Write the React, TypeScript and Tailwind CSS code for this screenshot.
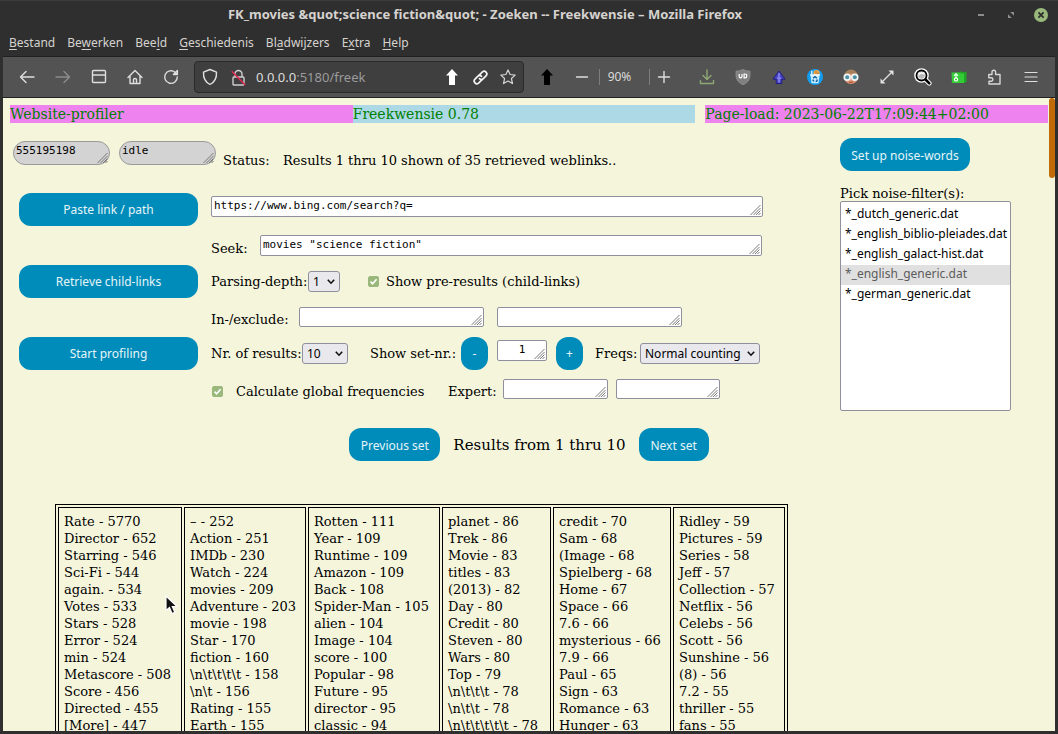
import React, { useId } from "react";
import type { ReactNode } from "react";

const menus: [string, string, string][] = [
  ["", "B", "estand"],
  ["Be", "w", "erken"],
  ["Bee", "l", "d"],
  ["", "G", "eschiedenis"],
  ["Bl", "a", "dwijzers"],
  ["E", "x", "tra"],
  ["", "H", "elp"],
];

const noiseFilters = [
  "*_dutch_generic.dat",
  "*_english_biblio-pleiades.dat",
  "*_english_galact-hist.dat",
  "*_english_generic.dat",
  "*_german_generic.dat",
];

const columns: { width: string; lines: string[] }[] = [
  { width: "w-[124px]", lines: ["Rate - 5770", "Director - 652", "Starring - 546", "Sci-Fi - 544", "again. - 534", "Votes - 533", "Stars - 528", "Error - 524", "min - 524", "Metascore - 508", "Score - 456", "Directed - 455", "[More] - 447"] },
  { width: "w-[122px]", lines: ["– - 252", "Action - 251", "IMDb - 230", "Watch - 224", "movies - 209", "Adventure - 203", "movie - 198", "Star - 170", "fiction - 160", "\\n\\t\\t\\t\\t - 158", "\\n\\t - 156", "Rating - 155", "Earth - 155"] },
  { width: "w-[132px]", lines: ["Rotten - 111", "Year - 109", "Runtime - 109", "Amazon - 109", "Back - 108", "Spider-Man - 105", "alien - 104", "Image - 104", "score - 100", "Popular - 98", "Future - 95", "director - 95", "classic - 94"] },
  { width: "w-[109px]", lines: ["planet - 86", "Trek - 86", "Movie - 83", "titles - 83", "(2013) - 82", "Day - 80", "Credit - 80", "Steven - 80", "Wars - 80", "Top - 79", "\\n\\t\\t\\t - 78", "\\n\\t\\t - 78", "\\n\\t\\t\\t\\t\\t - 78"] },
  { width: "w-[118px]", lines: ["credit - 70", "Sam - 68", "(Image - 68", "Spielberg - 68", "Home - 67", "Space - 66", "7.6 - 66", "mysterious - 66", "7.9 - 66", "Paul - 65", "Sign - 63", "Romance - 63", "Hunger - 63"] },
  { width: "w-[112px]", lines: ["Ridley - 59", "Pictures - 59", "Series - 58", "Jeff - 57", "Collection - 57", "Netflix - 56", "Celebs - 56", "Scott - 56", "Sunshine - 56", "(8) - 56", "7.2 - 55", "thriller - 55", "fans - 55"] },
];

function ToolButton({ label, className = "w-9", children }: { label: string; className?: string; children: ReactNode }) {
  return (
    <button type="button" aria-label={label} className={`flex h-8 shrink-0 items-center justify-center ${className}`}>
      {children}
    </button>
  );
}

function Line({ d, color = "#dedede", width = 1.4 }: { d: string; color?: string; width?: number }) {
  return (
    <svg width="16" height="16" viewBox="0 0 16 16" fill="none" stroke={color} strokeWidth={width} strokeLinecap="round" strokeLinejoin="round">
      <path d={d} />
    </svg>
  );
}

function Action({ className = "", children }: { className?: string; children: ReactNode }) {
  return (
    <button type="button" className={`h-[33px] shrink-0 rounded-xl bg-[#008cba] pt-0.5 font-['Noto_Sans',sans-serif] text-xs text-[#e6f4f8] ${className}`}>
      {children}
    </button>
  );
}

function Label({ htmlFor, className = "", children }: { htmlFor: string; className?: string; children: ReactNode }) {
  return (
    <label htmlFor={htmlFor} className={`pt-0.5 leading-[14px] whitespace-nowrap ${className}`}>
      {children}
    </label>
  );
}

function Area({ id, label, value = "", wrap, box }: { id?: string; label?: string; value?: string; wrap: string; box?: string }) {
  return (
    <div className={`relative shrink-0 ${wrap}`}>
      <textarea
        id={id}
        aria-label={label}
        defaultValue={value}
        className={`block h-full w-full resize-none overflow-hidden border px-[2px] py-[2px] font-['DejaVu_Sans_Mono',monospace] text-[11px] leading-[13px] text-black outline-none ${box ?? "rounded-[2px] border-[#8f8f9d] bg-white"}`}
      />
      <svg className="pointer-events-none absolute right-[2px] bottom-[2px]" width="11" height="10" viewBox="0 0 11 10" stroke="#6c6c6c" strokeWidth="0.9" fill="none">
        <path d="M0.5 10 10.5 0M3.5 10 10.5 3M6 10 10.5 5.5M8.5 10 10.5 8" />
      </svg>
    </div>
  );
}

function Drop({ id, options, className }: { id: string; options: string[]; className: string }) {
  return (
    <div className={`relative shrink-0 ${className}`}>
      <select id={id} className="block h-[21px] w-full appearance-none rounded-[3px] border border-[#8f8f9d] bg-[#e9e9ed] pl-1 font-['Noto_Sans',sans-serif] text-xs leading-[19px] text-black">
        {options.map((o) => (
          <option key={o}>{o}</option>
        ))}
      </select>
      <svg className="pointer-events-none absolute top-[8px] right-[5px]" width="8" height="6" viewBox="0 0 8 6" fill="none" stroke="#111" strokeWidth="1.6">
        <path d="M0.8 0.8 4 4.2 7.2 0.8" />
      </svg>
    </div>
  );
}

function Check({ id, children, className }: { id: string; children: ReactNode; className: string }) {
  return (
    <div className={`flex items-center ${className}`}>
      <span className="relative flex">
        <input id={id} type="checkbox" defaultChecked className="peer size-[11px] appearance-none rounded-[2px] border border-[#8f8f9d] bg-white checked:border-[#9ab87c] checked:bg-[#9ab87c]" />
        <svg className="pointer-events-none absolute inset-0 hidden peer-checked:block" width="11" height="11" viewBox="0 0 11 11" fill="none" stroke="#fff" strokeWidth="1.6">
          <path d="M2.5 5.6 4.6 7.8 8.6 3.2" />
        </svg>
      </span>
      <Label htmlFor={id}>{children}</Label>
    </div>
  );
}

function TitleBar() {
  return (
    <header className="flex h-7 shrink-0 items-center border-t border-[#3c3c3c] pr-0.5 pl-1">
      <h1 className="min-w-0 flex-1 truncate text-center text-[13px] font-bold text-[#d6d3cf]">
        FK_movies &amp;quot;science fiction&amp;quot; - Zoeken -- Freekwensie – Mozilla Firefox
      </h1>
      <button type="button" aria-label="Minimize" className="flex w-[30px] justify-center">
        <span className="h-[2px] w-1.5 bg-[#8d8d8d]" />
      </button>
      <button type="button" aria-label="Restore" className="flex w-[30px] justify-center">
        <svg width="6" height="6" viewBox="0 0 7 7" fill="#8d8d8d">
          <path d="M2.5 0H7V4.5ZM0 2.5V7H4.5Z" />
        </svg>
      </button>
      <button type="button" aria-label="Close" className="flex w-[30px] justify-center">
        <svg width="14" height="14" viewBox="0 0 14 14">
          <circle cx="7" cy="7" r="7" fill="#9ab87c" />
          <path d="M4.4 4.4 9.6 9.6M9.6 4.4 4.4 9.6" stroke="#2f2f2f" strokeWidth="1.8" />
        </svg>
      </button>
    </header>
  );
}

function Toolbar() {
  return (
    <div className="mx-[3px] flex h-[42px] shrink-0 items-center border-y border-[#202020] bg-[#535353] pr-1.5 pl-1.5">
      <ToolButton label="Back"><Line d="M15 8H1.5M7 2.5 1.5 8 7 13.5" /></ToolButton>
      <ToolButton label="Forward"><Line d="M1 8H14.5M9 2.5 14.5 8 9 13.5" color="#8c8c8c" /></ToolButton>
      <ToolButton label="Tabs"><Line d="M2.5 1.5H13.5Q14.5 1.5 14.5 2.5V12.5Q14.5 13.5 13.5 13.5H2.5Q1.5 13.5 1.5 12.5V2.5Q1.5 1.5 2.5 1.5ZM1.5 6H14.5" /></ToolButton>
      <ToolButton label="Home"><Line d="M1 8.5 8 1.5 15 8.5M3 7V14.5H13V7M6.5 14V10.5Q6.5 9.5 8 9.5 9.5 9.5 9.5 10.5V14" /></ToolButton>
      <ToolButton label="Reload"><Line d="M14.3 8A6.3 6.3 0 1 1 12 3.2L13.5 4.8M14.4 1.5V5.5H10.4Z" /></ToolButton>

      <div className="ml-[5px] flex h-8 min-w-0 flex-1 items-center rounded-[4px] border border-[#2a2a2a] bg-[#3f3f3f] pr-[1px]">
        <ToolButton label="Protection" className="w-[29px]">
          <svg width="16" height="18" viewBox="0 0 16 18" fill="none" stroke="#e0e0e0" strokeWidth="1.4" strokeLinejoin="round">
            <path d="M8 1.5 14.5 4.2C14.8 10.2 12.5 14.2 8 16.5 3.5 14.2 1.2 10.2 1.5 4.2Z" />
          </svg>
        </ToolButton>
        <ToolButton label="Connection not secure" className="w-7">
          <svg width="15" height="17" viewBox="0 0 15 17" fill="none" stroke="#cfcfcf" strokeWidth="1.4">
            <rect x="2" y="8" width="11" height="8" rx="1" />
            <path d="M4 8V5A3.5 3.5 0 0 1 11 5V8" />
            <path d="M0.8 2.2 14.2 16" stroke="#e22850" strokeWidth="1.6" />
          </svg>
        </ToolButton>
        <div className="min-w-0 flex-1 truncate pt-0.5 pl-1 text-[13px] text-[#9b9b9b]">
          <span className="text-[#dddddd]">0.0.0.0</span>:5180/freek
        </div>
        <ToolButton label="Upload" className="w-7">
          <svg width="12" height="16" viewBox="0 0 12 16" fill="#fff"><path d="M6 0 12 6.5H9V16H3V6.5H0Z" /></svg>
        </ToolButton>
        <ToolButton label="Copy link" className="w-7">
          <svg width="17" height="17" viewBox="0 0 17 17" fill="none" stroke="#f4f4f4" strokeWidth="1.7" strokeLinecap="round">
            <path d="M7 6.3 10.4 2.9A2.7 2.7 0 0 1 14.2 6.7L11.3 9.6A2.7 2.7 0 0 1 7.5 9.6" />
            <path d="M10 10.7 6.6 14.1A2.7 2.7 0 0 1 2.8 10.3L5.7 7.4A2.7 2.7 0 0 1 9.5 7.4" />
          </svg>
        </ToolButton>
        <ToolButton label="Bookmark" className="w-7">
          <Line d="M8 0.9 10.1 5.5 15.2 6.1 11.4 9.5 12.5 14.6 8 12 3.5 14.6 4.6 9.5 0.8 6.1 5.9 5.5Z" color="#d4d4d4" width={1.2} />
        </ToolButton>
      </div>

      <ToolButton label="Go up" className="ml-[5px] w-9">
        <svg width="12" height="16" viewBox="0 0 12 16" fill="#000"><path d="M6 0 12 6.5H9V16H3V6.5H0Z" /></svg>
      </ToolButton>
      <ToolButton label="Zoom out" className="w-[34px]"><Line d="M2.5 8H13.5" /></ToolButton>
      <span className="h-4 w-px bg-[#7d7d7d]" />
      <button type="button" className="w-[39px] text-center text-xs text-[#dadada]">90%</button>
      <span className="ml-[10px] h-4 w-px bg-[#7d7d7d]" />
      <ToolButton label="Zoom in" className="mr-[11px] w-7"><Line d="M2.5 8H13.5M8 2.5V13.5" /></ToolButton>
      <ToolButton label="Downloads"><Line d="M8 1V10M4 6.5 8 10.5 12 6.5M1.5 11.5V14.5H14.5V11.5" color="#8fa876" /></ToolButton>
      <ToolButton label="Ad blocker">
        <svg width="16" height="16" viewBox="0 0 16 16">
          <path d="M8 0.5Q11 2.2 15 2.2V6.5Q15 12.8 8 15.8 1 12.8 1 6.5V2.2Q5 2.2 8 0.5Z" fill="#808080" stroke="#929292" strokeWidth="0.8" />
          <path d="M4.2 5V7.6Q4.2 8.9 5.6 8.9 7 8.9 7 7.6V5M9.1 5V8.9H10Q11.8 8.9 11.8 7 11.8 5 10 5Z" fill="none" stroke="#fff" strokeWidth="1.2" />
        </svg>
      </ToolButton>
      <ToolButton label="Parent folder">
        <svg width="14" height="15" viewBox="0 0 14 15">
          <path d="M7 1 13 9.2H9.8V13.5H4.2V9.2H1Z" fill="#4a45c4" stroke="#211d80" />
          <path d="M7 3 7 12.5M5 8.2H9" stroke="#8683ee" strokeWidth="1.6" />
        </svg>
      </ToolButton>
      <ToolButton label="Cookie cleaner">
        <svg width="16" height="16" viewBox="0 0 16 16">
          <circle cx="8" cy="8" r="8" fill="#119df0" />
          <circle cx="9.5" cy="4" r="3.1" fill="#eca548" />
          <path d="M8.4 3H9.6M10.4 4.4H11.4" stroke="#86511f" />
          <path d="M3.5 5.8H12.5L11.5 14.2H4.5Z" fill="#c8edff" />
          <path d="M3 5.8H13M4.8 1.8V5" stroke="#f5fbff" strokeWidth="1.2" />
          <path d="M6.1 9.3 8 7.6 9.9 9.3M10.4 10.4 9.6 12.4H8.6M6.9 12.4 5.7 10.7" fill="none" stroke="#0d5c99" strokeWidth="1.4" />
        </svg>
      </ToolButton>
      <ToolButton label="Disguise">
        <svg width="16" height="16" viewBox="0 0 16 16">
          <circle cx="8" cy="8" r="7" fill="#e0926e" />
          <path d="M1 8A7 7.4 0 0 1 15 8Q13.5 4.6 8 4.4 2.5 4.6 1 8Z" fill="#a5805a" />
          <circle cx="4.2" cy="8.2" r="2.9" fill="#4f8fa3" stroke="#eef6f6" strokeWidth="1.7" />
          <circle cx="11.8" cy="8.2" r="2.9" fill="#4f8fa3" stroke="#eef6f6" strokeWidth="1.7" />
          <path d="M6 13Q8 14 10 13" fill="none" stroke="#a04f3c" />
        </svg>
      </ToolButton>
      <ToolButton label="Expand">
        <svg width="14" height="14" viewBox="0 0 14 14" fill="#e2e2e2" stroke="#e2e2e2">
          <path d="M3 11 11 3" strokeWidth="1.3" />
          <path d="M8.5 0.5H13.5V5.5ZM0.5 8.5V13.5H5.5Z" stroke="none" />
        </svg>
      </ToolButton>
      <ToolButton label="Search page">
        <svg width="18" height="18" viewBox="0 0 18 18" fill="none">
          <circle cx="7.5" cy="7.5" r="5.3" fill="#b8b8b8" stroke="#fff" strokeWidth="4" />
          <path d="M11.5 11.5 15.3 15.3" stroke="#fff" strokeWidth="4.6" strokeLinecap="round" />
          <circle cx="7.5" cy="7.5" r="5" stroke="#000" strokeWidth="1.8" />
          <path d="M11.5 11.5 15.3 15.3" stroke="#000" strokeWidth="2.6" strokeLinecap="round" />
          <path d="M5 7A2.6 2.6 0 0 1 9.8 6.4" stroke="#fff" strokeWidth="1.2" />
        </svg>
      </ToolButton>
      <ToolButton label="Folder">
        <svg width="16" height="14" viewBox="0 0 16 14">
          <path d="M7 3 9 1.5H11L12 2.5L15.5 1.5V12L13 13H7Z" fill="#1fa824" />
          <path d="M0.5 2.5H8L9 3.5H13V13H1Z" fill="#35cc39" />
          <path d="M5 3.6V8M3 5.8 5 3.6 7 5.8" fill="none" stroke="#e8ffe8" strokeWidth="1.2" />
          <circle cx="5" cy="9.4" r="1.6" fill="none" stroke="#fff" strokeWidth="1.2" />
        </svg>
      </ToolButton>
      <ToolButton label="Extensions">
        <Line d="M1.8 5.5H5V3A1.8 1.8 0 0 1 8.6 3V5.5H13V15H2V12.2H4.2A1.7 1.7 0 0 0 4.2 8.8H1.8Z" color="#d8d8d8" />
      </ToolButton>
      <ToolButton label="Menu"><Line d="M2 3.5H14M2 8H14M2 12.5H14" width={1.2} /></ToolButton>
    </div>
  );
}

function SettingsForm() {
  const id = useId();
  return (
    <form className="grid auto-rows-[36px] grid-cols-[179px_1fr] gap-x-[13px] pl-1.5">
      <Action className="self-center">Paste link / path</Action>
      <div className="pt-[5px]">
        <Area label="Link" value="https://www.bing.com/search?q=" wrap="h-[21px] w-[552px]" />
      </div>

      <div className="col-start-2 flex items-end pb-[7px]">
        <Label htmlFor={`${id}s`} className="w-[49px]">Seek:</Label>
        <Area id={`${id}s`} value={'movies "science fiction"'} wrap="h-[21px] w-[502px]" />
      </div>

      <Action className="self-center">Retrieve child-links</Action>
      <div className="flex items-center">
        <Label htmlFor={`${id}p`} className="w-[97px]">Parsing-depth:</Label>
        <Drop id={`${id}p`} options={["1", "2", "3"]} className="w-8" />
        <Check id={`${id}c`} className="ml-7 gap-[7px]">Show pre-results (child-links)</Check>
      </div>

      <div className="col-start-2 flex items-end pb-[8px]">
        <Label htmlFor={`${id}i`} className="w-[88px]">In-/exclude:</Label>
        <Area id={`${id}i`} wrap="h-5 w-[185px]" />
        <Area label="Exclude" wrap="ml-[13px] h-5 w-[185px]" />
      </div>

      <Action className="self-center">Start profiling</Action>
      <div className="flex items-center">
        <Label htmlFor={`${id}n`} className="w-[91px]">Nr. of results:</Label>
        <Drop id={`${id}n`} options={["10", "20", "50"]} className="w-[46px]" />
        <Label htmlFor={`${id}r`} className="ml-[22px] w-[91px]">Show set-nr.:</Label>
        <Action className="w-[27px]">-</Action>
        <Area id={`${id}r`} value="1" wrap="mt-[5px] ml-[9px] h-[21px] w-[50px] self-start" box="rounded-[2px] border-[#8f8f9d] bg-white text-center" />
        <Action className="ml-[9px] w-[27px]">+</Action>
        <Label htmlFor={`${id}f`} className="ml-3 w-[45px]">Freqs:</Label>
        <Drop id={`${id}f`} options={["Normal counting"]} className="w-[120px]" />
      </div>

      <div className="col-start-2 flex items-end pb-[8px]">
        <Check id={`${id}g`} className="w-[237px] gap-[13px] pl-px">Calculate global frequencies</Check>
        <Label htmlFor={`${id}e`} className="w-[55px]">Expert:</Label>
        <Area id={`${id}e`} wrap="h-5 w-[105px]" />
        <Area label="Expert option" wrap="ml-2 h-5 w-[104px]" />
      </div>
    </form>
  );
}

export default function App() {
  const id = useId();
  return (
    <div className="flex h-screen flex-col overflow-hidden bg-[#2f2f2f] font-['Noto_Sans',sans-serif]">
      <TitleBar />
      <nav className="flex h-7 shrink-0 items-center gap-3 pt-0.5 pl-[9px] text-xs text-[#d6d3cf]">
        {menus.map(([a, b, c]) => (
          <button key={a + b + c} type="button">
            {a}
            <span className="underline underline-offset-2">{b}</span>
            {c}
          </button>
        ))}
      </nav>
      <Toolbar />

      <div className="relative mx-[3px] mb-[3px] min-h-0 flex-1 overflow-hidden bg-[#f5f5dc] font-['DejaVu_Serif',serif] text-[13px] leading-4 text-black">
        <span className="absolute top-0 right-0 h-20 w-1.5 rounded-[3px] bg-[#c06b08]" />

        <div className="flex px-[7px] pt-[7px] text-[14px] leading-[18px] text-[#008000]">
          <div className="flex-1 bg-[#ee82ee]">Website-profiler</div>
          <div className="flex-1 bg-[#add8e6]">Freekwensie 0.78</div>
          <div className="ml-[10px] flex-1 bg-[#ee82ee]">Page-load: 2023-06-22T17:09:44+02:00</div>
        </div>

        <main className="pt-[15px]">
          <div className="flex">
            <div className="w-[827px] shrink-0 pt-[3px] pl-[10px]">
              <div className="flex h-[50px] items-start">
                <Area label="Counter" value="555195198" wrap="h-6 w-[97px]" box="rounded-xl border-[#9a9a9a] bg-[#d3d3d3]" />
                <Area label="State" value="idle" wrap="ml-[9px] h-6 w-[97px]" box="rounded-xl border-[#9a9a9a] bg-[#d3d3d3]" />
                <span className="ml-[7px] w-[60px] pt-3">Status:</span>
                <output className="pt-3">Results 1 thru 10 shown of 35 retrieved weblinks..</output>
              </div>
              <SettingsForm />
            </div>
            <aside className="ml-[10px] flex w-[171px] shrink-0 flex-col">
              <Action className="w-[130px]">Set up noise-words</Action>
              <Label htmlFor={`${id}l`} className="mt-[14px]">Pick noise-filter(s):</Label>
              <select
                id={`${id}l`}
                multiple
                defaultValue={["*_english_generic.dat"]}
                className="block h-[210px] w-full overflow-hidden rounded-[2px] border border-[#8f8f9d] bg-white py-[3px] font-['Noto_Sans',sans-serif] text-xs text-black"
              >
                {noiseFilters.map((f) => (
                  <option key={f} className="h-5 px-1 py-0 leading-5 checked:bg-[#e0e0e0] checked:bg-[linear-gradient(#e0e0e0,#e0e0e0)] checked:text-[#5c5c5c]">
                    {f}
                  </option>
                ))}
              </select>
            </aside>
          </div>

          <div className="mt-[17px] flex items-center justify-center gap-[13px]">
            <Action className="w-[91px]">Previous set</Action>
            <span className="text-[15px]">Results from 1 thru 10</span>
            <Action className="w-[70px]">Next set</Action>
          </div>

          <table className="mt-[43px] ml-[52px] border-separate border-spacing-[2px] border border-black text-[13px] leading-[17px]">
            <tbody>
              <tr>
                {columns.map(({ width, lines }) => (
                  <td key={lines[0]} className={`border border-black px-[5px] pt-[5px] align-top whitespace-nowrap ${width}`}>
                    {lines.map((line) => (
                      <div key={line}>{line}</div>
                    ))}
                  </td>
                ))}
              </tr>
            </tbody>
          </table>
        </main>

        <svg className="pointer-events-none absolute top-[497px] left-[162px]" width="14" height="21" viewBox="0 0 14 21">
          <path d="M1 1V15.5L4.5 12.5 7 18.5 9.8 17.3 7.3 11.5H12Z" fill="#111" stroke="#fff" strokeWidth="1.2" />
        </svg>
      </div>
    </div>
  );
}
